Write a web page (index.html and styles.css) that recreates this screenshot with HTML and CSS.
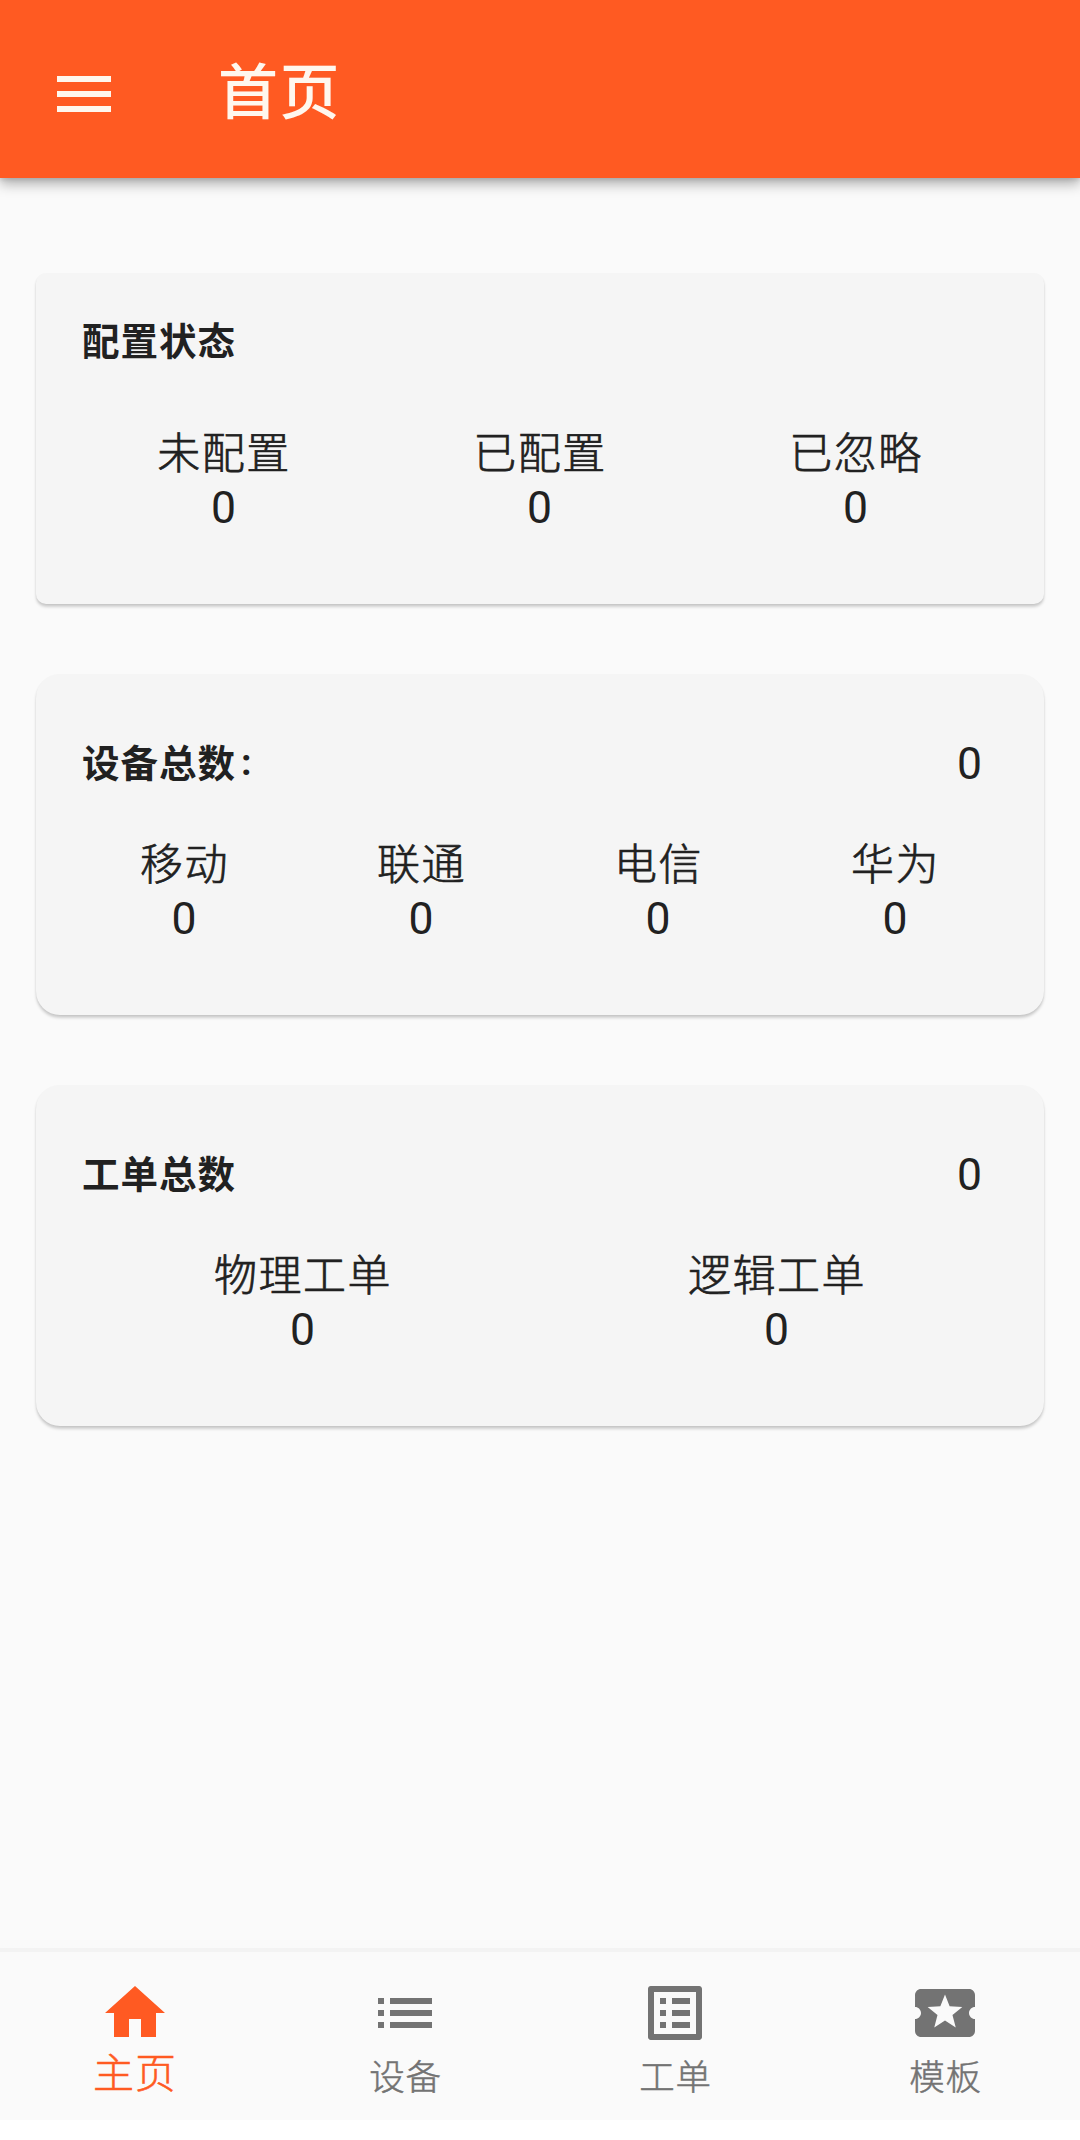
FILE: index.html
```html
<!DOCTYPE html>
<html lang="zh-CN">
<head>
<meta charset="utf-8">
<title>首页</title>
<link rel="stylesheet" href="styles.css">
</head>
<body>
<div class="app">
  <header class="app-bar">
    <svg class="icon" viewBox="0 0 24 24"><path d="M3 18h18v-2H3v2zm0-5h18v-2H3v2zm0-7v2h18V6H3z"/></svg>
    <h1 class="app-title">首页</h1>
  </header>

  <main class="content">
    <section class="card card-compact">
      <div class="card-head"><h2 class="card-title">配置状态</h2></div>
      <div class="stats">
        <div class="stat"><span class="label">未配置</span><span class="number">0</span></div>
        <div class="stat"><span class="label">已配置</span><span class="number">0</span></div>
        <div class="stat"><span class="label">已忽略</span><span class="number">0</span></div>
      </div>
    </section>

    <section class="card">
      <div class="card-head"><h2 class="card-title">设备总数<span class="colon">:</span></h2><span class="number">0</span></div>
      <div class="stats">
        <div class="stat"><span class="label">移动</span><span class="number">0</span></div>
        <div class="stat"><span class="label">联通</span><span class="number">0</span></div>
        <div class="stat"><span class="label">电信</span><span class="number">0</span></div>
        <div class="stat"><span class="label">华为</span><span class="number">0</span></div>
      </div>
    </section>

    <section class="card">
      <div class="card-head"><h2 class="card-title">工单总数</h2><span class="number">0</span></div>
      <div class="stats">
        <div class="stat"><span class="label">物理工单</span><span class="number">0</span></div>
        <div class="stat"><span class="label">逻辑工单</span><span class="number">0</span></div>
      </div>
    </section>
  </main>

  <nav class="tabs">
    <a class="tab tab-active">
      <svg class="icon" viewBox="0 0 24 24"><path d="M10 20v-6h4v6h5v-8h3L12 3 2 12h3v8z"/></svg>
      <span class="tab-label">主页</span>
    </a>
    <a class="tab">
      <svg class="icon" viewBox="0 0 24 24"><path d="M3 13h2v-2H3v2zm0 4h2v-2H3v2zm0-8h2V7H3v2zm4 4h14v-2H7v2zm0 4h14v-2H7v2zM7 7v2h14V7H7z"/></svg>
      <span class="tab-label">设备</span>
    </a>
    <a class="tab">
      <svg class="icon" viewBox="0 0 24 24"><path d="M19 5v14H5V5h14m1.100-2H3.900c-.5 0-.9.400-.9.900v16.200c0 .4.400.9.900.9h16.200c.4 0 .9-.5.900-.9V3.900c0-.5-.5-.9-.9-.9zM11 7h6v2h-6V7zm0 4h6v2h-6v-2zm0 4h6v2h-6v-2zM7 7h2v2H7V7zm0 4h2v2H7v-2zm0 4h2v2H7v-2z"/></svg>
      <span class="tab-label">工单</span>
    </a>
    <a class="tab">
      <svg class="icon" viewBox="0 0 24 24"><path d="M20 12c0-1.100.9-2 2-2V6c0-1.100-.9-2-2-2H4c-1.100 0-1.990.9-1.990 2v4c1.100 0 1.990.9 1.990 2s-.89 2-2 2v4c0 1.100.9 2 2 2h16c1.100 0 2-.9 2-2v-4c-1.100 0-2-.9-2-2zm-4.420 4.800L12 14.500l-3.580 2.300 1.080-4.120-3.290-2.690 4.240-.25L12 5.800l1.540 3.950 4.240.25-3.290 2.690 1.090 4.110z"/></svg>
      <span class="tab-label">模板</span>
    </a>
  </nav>
</div>
</body>
</html>
```
FILE: styles.css
```css
* {
  box-sizing: border-box;
}

body {
  margin: 0;
  background: #fff;
  color: #212121;
  font-family: Roboto, "Noto Sans CJK SC", sans-serif;
}

.app {
  display: flex;
  flex-direction: column;
  height: 2120px;
  background: #fafafa;
}

.icon {
  display: block;
  width: 72px;
  height: 72px;
  fill: currentColor;
}

.app-bar {
  display: flex;
  align-items: center;
  gap: 98px;
  height: 178px;
  padding: 10px 48px 0;
  background: #ff5a22;
  color: #fff7ee;
  box-shadow: 0 6px 12px rgba(0, 0, 0, 0.3), 0 2px 4px rgba(0, 0, 0, 0.1);
}

.app-title {
  margin: 0;
  font-size: 60px;
  font-weight: 500;
  line-height: 80px;
  letter-spacing: 1.500px;
}

.content {
  flex: 1;
  display: flex;
  flex-direction: column;
  gap: 70px;
  padding: 95px 36px 0;
}

.card {
  height: 341px;
  padding: 62px 30px 0;
  border-radius: 24px;
  background: #f5f5f5;
  box-shadow: 0 3px 3px rgba(0, 0, 0, 0.17), 0 1px 2px rgba(0, 0, 0, 0.06);
}

.card-compact {
  height: 331px;
  padding-top: 41px;
  border-radius: 10px;
}

.card-head {
  display: flex;
  align-items: center;
  justify-content: space-between;
  height: 56px;
  padding: 0 32px 0 16px;
}

.card-title {
  margin: 0;
  font-size: 37.500px;
  font-weight: 700;
  line-height: 56px;
  letter-spacing: 1px;
}

.colon {
  margin-left: 5px;
  vertical-align: 2px;
  line-height: 1;
}

.stats {
  display: flex;
  margin-top: 47px;
}

.card-compact .stats {
  margin-top: 58px;
}

.stat {
  flex: 1;
  display: flex;
  flex-direction: column;
  align-items: center;
}

.label {
  font-size: 43px;
  font-weight: 300;
  line-height: 53px;
  letter-spacing: 1.500px;
  -webkit-text-stroke: 0.700px currentColor;
}

.number {
  font-size: 44.500px;
  line-height: 54px;
}

.stat .number {
  padding-right: 1px;
}

.tabs {
  display: flex;
  height: 172px;
  border-top: 4px solid #f3f3f3;
}

.tab {
  flex: 1;
  display: flex;
  flex-direction: column;
  align-items: center;
  padding-top: 25px;
  color: #737373;
}

.tab-label {
  padding: 3px 0 0 1px;
  font-size: 35.500px;
  font-weight: 300;
  line-height: 52px;
  letter-spacing: 0.800px;
  -webkit-text-stroke: 0.500px currentColor;
}

.tab-active {
  color: #ff5a22;
}

.tab-active .tab-label {
  padding: 2px 0 0;
  font-size: 41px;
  line-height: 46px;
  letter-spacing: 1px;
}
```
